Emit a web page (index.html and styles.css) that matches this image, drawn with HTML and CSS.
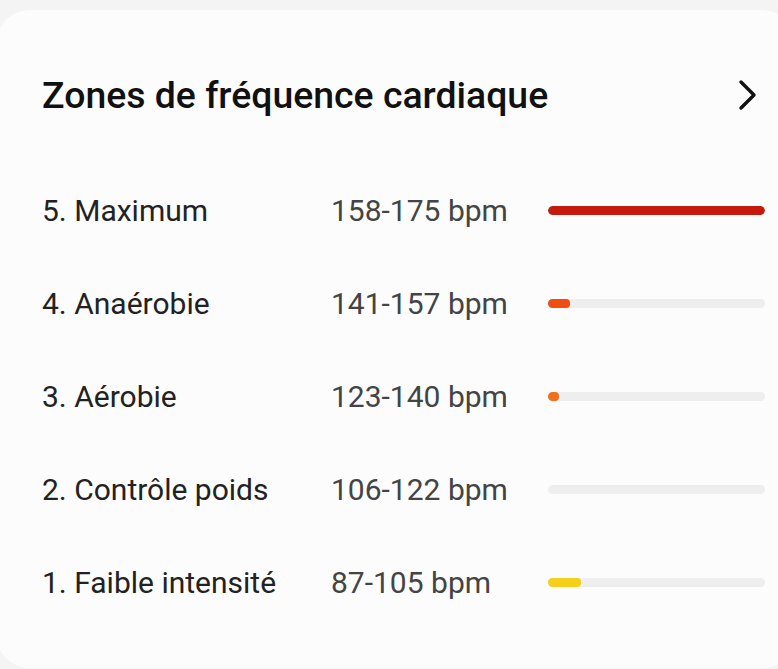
FILE: index.html
```html
<!DOCTYPE html>
<html lang="fr">
<head>
    <meta charset="UTF-8">
    <meta name="viewport" content="width=device-width, initial-scale=1.0">
    <title>Zones de fréquence cardiaque</title>
    <link rel="stylesheet" href="styles.css">
</head>
<body>
    <div class="card">
        <div class="header">
            <h1 class="title">Zones de fréquence cardiaque</h1>
            <svg class="chevron" width="20" height="32" viewBox="0 0 20 32">
                <path d="M3 3 L16 16 L3 29" fill="none" stroke="#111" stroke-width="3.4" stroke-linecap="round" stroke-linejoin="round"/>
            </svg>
        </div>

        <div class="zones">
            <div class="zone">
                <span class="name">5. Maximum</span>
                <span class="range">158-175 bpm</span>
                <div class="track"><div class="fill max" style="width: 100%"></div></div>
            </div>
            <div class="zone">
                <span class="name">4. Anaérobie</span>
                <span class="range">141-157 bpm</span>
                <div class="track"><div class="fill anaerobic" style="width: 10%"></div></div>
            </div>
            <div class="zone">
                <span class="name">3. Aérobie</span>
                <span class="range">123-140 bpm</span>
                <div class="track"><div class="fill aerobic" style="width: 5%"></div></div>
            </div>
            <div class="zone">
                <span class="name">2. Contrôle poids</span>
                <span class="range">106-122 bpm</span>
                <div class="track"><div class="fill weight" style="width: 0%"></div></div>
            </div>
            <div class="zone">
                <span class="name">1. Faible intensité</span>
                <span class="range">87-105 bpm</span>
                <div class="track"><div class="fill light" style="width: 15%"></div></div>
            </div>
        </div>
    </div>
</body>
</html>
```

FILE: styles.css
```css
* {
    margin: 0;
    padding: 0;
    box-sizing: border-box;
}

body {
    font-family: Roboto, "Liberation Sans", Arial, sans-serif;
    background-color: #f4f4f4;
    overflow: hidden;
}

.card {
    margin-top: 10px;
    margin-left: -4px;
    width: 800px;
    height: 658px;
    background-color: #fcfcfc;
    border-radius: 34px;
    padding: 65px 0 0 46px;
}

.header {
    display: flex;
    align-items: center;
    justify-content: space-between;
    width: 716px;
    height: 40px;
}

.title {
    font-size: 37.4px;
    font-weight: 500;
    color: #111;
    line-height: 40px;
}

.chevron {
    display: block;
}

.zones {
    margin-top: 49px;
}

.zone {
    display: grid;
    grid-template-columns: 289px 217px 217px;
    align-items: center;
    height: 93px;
}

.name {
    font-size: 30px;
    color: #222;
}

.range {
    font-size: 30px;
    color: #444;
}

.track {
    height: 9px;
    background-color: #eeeeee;
    border-radius: 5px;
    overflow: hidden;
}

.fill {
    height: 100%;
    border-radius: 0 4px 4px 0;
}

.max {
    background-color: #c41a0b;
    border-radius: 5px;
}

.anaerobic {
    background-color: #f04d12;
}

.aerobic {
    background-color: #f07020;
}

.light {
    background-color: #f5d01a;
}
```
